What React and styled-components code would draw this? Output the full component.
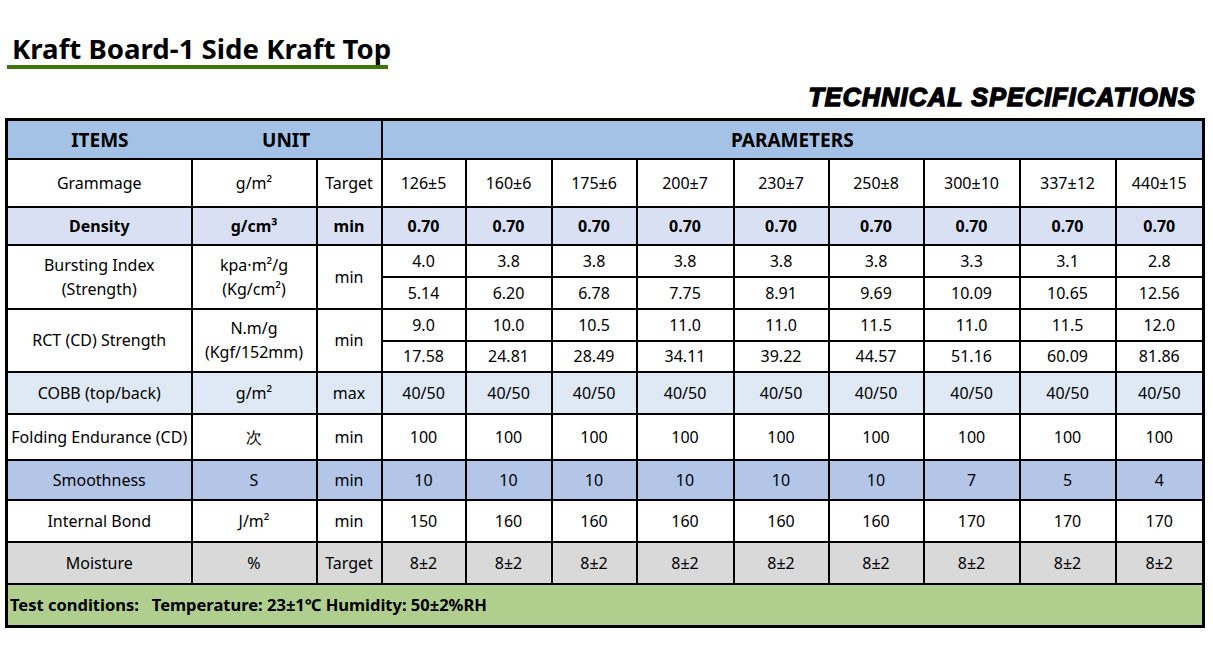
import React from "react";
import styled, { createGlobalStyle } from "styled-components";

const GlobalStyle = createGlobalStyle`
  html, body {
    margin: 0;
    padding: 0;
    background: #ffffff;
  }
  body {
    font-family: "Noto Sans", "Open Sans", sans-serif;
    color: #000;
  }
`;

const Page = styled.div`
  width: 1213px;
  padding: 31px 0 0 5px;
  box-sizing: border-box;
`;

const Title = styled.h1`
  display: inline-block;
  margin: 0 0 0 2px;
  padding: 0 0 0 5px;
  width: 376px;
  font-size: 27.6px;
  font-weight: 700;
  line-height: 34px;
  white-space: nowrap;
  border-bottom: 4px solid #3a760a;
`;

const SpecsHeading = styled.div`
  display: flex;
  justify-content: flex-end;
  padding-right: 17px;
  margin: 13px 0 6px;
  height: 30px;
  font-family: "Liberation Sans", Arial, sans-serif;
  font-size: 25px;
  font-weight: 900;
  font-style: italic;
  line-height: 30px;
  letter-spacing: 1.2px;
  -webkit-text-stroke: 1.5px #000;
`;

const Table = styled.table`
  border-collapse: collapse;
  table-layout: fixed;
  width: 1199px;
  border: 3px solid #000;
`;

const Cell = styled.td`
  border: 2px solid #000;
  padding: 0;
  text-align: center;
  vertical-align: middle;
  font-size: 16px;
  line-height: 24px;
  font-weight: ${(p) => (p.$bold ? 700 : 400)};
  background: ${(p) => p.$bg || "transparent"};
  height: ${(p) => p.$h}px;
  white-space: nowrap;
`;

const HeadCell = styled(Cell)`
  font-size: 19px;
  font-weight: 700;
  background: #a4c2e6;
  height: 37px;
`;

const HeadSplit = styled.div`
  display: flex;
  align-items: center;
`;

const HeadLabel = styled.span`
  width: ${(p) => p.$w}px;
  text-align: center;
`;

const NoteCell = styled.td`
  border: 2px solid #000;
  background: #b0ce8e;
  height: 40px;
  padding: 0 0 0 2px;
  font-size: 16.5px;
  font-weight: 700;
  text-align: left;
  white-space: pre;
`;

const colWidths = [185, 125, 65, 84, 86, 85, 97, 95, 95, 96, 96, 88];

const simpleRows = [
  { item: "Grammage", unit: "g/m²", lim: "Target", vals: ["126±5", "160±6", "175±6", "200±7", "230±7", "250±8", "300±10", "337±12", "440±15"], h: 46 },
  { item: "Density", unit: "g/cm³", lim: "min", vals: Array(9).fill("0.70"), h: 36, bold: true, bg: "#d9e0f3" },
];

const splitRows = [
  {
    item: ["Bursting Index", "(Strength)"],
    unit: ["kpa·m²/g", "(Kg/cm²)"],
    top: ["4.0", "3.8", "3.8", "3.8", "3.8", "3.8", "3.3", "3.1", "2.8"],
    bottom: ["5.14", "6.20", "6.78", "7.75", "8.91", "9.69", "10.09", "10.65", "12.56"],
    h: [30, 30],
  },
  {
    item: ["RCT (CD) Strength"],
    unit: ["N.m/g", "(Kgf/152mm)"],
    top: ["9.0", "10.0", "10.5", "11.0", "11.0", "11.5", "11.0", "11.5", "12.0"],
    bottom: ["17.58", "24.81", "28.49", "34.11", "39.22", "44.57", "51.16", "60.09", "81.86"],
    h: [29.5, 29],
  },
];

const lowerRows = [
  { item: "COBB (top/back)", unit: "g/m²", lim: "max", vals: Array(9).fill("40/50"), h: 40, bg: "#dfe9f6" },
  { item: "Folding Endurance (CD)", unit: "次", lim: "min", vals: Array(9).fill("100"), h: 44 },
  { item: "Smoothness", unit: "S", lim: "min", vals: ["10", "10", "10", "10", "10", "10", "7", "5", "4"], h: 38.5, bg: "#b4c6e7" },
  { item: "Internal Bond", unit: "J/m²", lim: "min", vals: ["150", "160", "160", "160", "160", "160", "170", "170", "170"], h: 39.5 },
  { item: "Moisture", unit: "%", lim: "Target", vals: Array(9).fill("8±2"), h: 40, bg: "#d9d9d9" },
];

const SimpleRow = ({ row }) => (
  <tr>
    <Cell $h={row.h} $bold={row.bold} $bg={row.bg}>{row.item}</Cell>
    <Cell $h={row.h} $bold={row.bold} $bg={row.bg}>{row.unit}</Cell>
    <Cell $h={row.h} $bold={row.bold} $bg={row.bg}>{row.lim}</Cell>
    {row.vals.map((v, i) => (
      <Cell key={i} $h={row.h} $bold={row.bold} $bg={row.bg}>{v}</Cell>
    ))}
  </tr>
);

const SplitRows = ({ row }) => (
  <>
    <tr>
      <Cell rowSpan={2}>
        {row.item.map((t) => <div key={t}>{t}</div>)}
      </Cell>
      <Cell rowSpan={2}>
        {row.unit.map((t) => <div key={t}>{t}</div>)}
      </Cell>
      <Cell rowSpan={2}>min</Cell>
      {row.top.map((v, i) => (
        <Cell key={i} $h={row.h[0]}>{v}</Cell>
      ))}
    </tr>
    <tr>
      {row.bottom.map((v, i) => (
        <Cell key={i} $h={row.h[1]}>{v}</Cell>
      ))}
    </tr>
  </>
);

export default function App() {
  return (
    <>
      <GlobalStyle />
      <Page>
        <Title>Kraft Board-1 Side Kraft Top</Title>
        <SpecsHeading>TECHNICAL SPECIFICATIONS</SpecsHeading>
        <Table>
          <colgroup>
            {colWidths.map((w, i) => (
              <col key={i} style={{ width: w }} />
            ))}
          </colgroup>
          <tbody>
            <tr>
              <HeadCell colSpan={3}>
                <HeadSplit>
                  <HeadLabel $w={185}>ITEMS</HeadLabel>
                  <HeadLabel $w={190}>UNIT</HeadLabel>
                </HeadSplit>
              </HeadCell>
              <HeadCell colSpan={9}>PARAMETERS</HeadCell>
            </tr>
            {simpleRows.map((row) => (
              <SimpleRow key={row.item} row={row} />
            ))}
            {splitRows.map((row) => (
              <SplitRows key={row.item[0]} row={row} />
            ))}
            {lowerRows.map((row) => (
              <SimpleRow key={row.item} row={row} />
            ))}
            <tr>
              <NoteCell colSpan={12}>
                {"Test conditions:   Temperature: 23±1℃ Humidity: 50±2%RH"}
              </NoteCell>
            </tr>
          </tbody>
        </Table>
      </Page>
    </>
  );
}
